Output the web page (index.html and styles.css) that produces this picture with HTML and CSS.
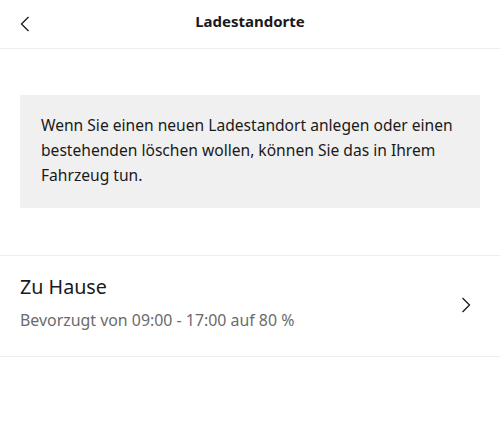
FILE: index.html
```html
<!DOCTYPE html>
<html lang="de">
<head>
<meta charset="utf-8">
<link rel="stylesheet" href="styles.css">
</head>
<body>
<header class="topbar">
  <button class="back" aria-label="Zurück">
    <svg width="10" height="16" viewBox="0 0 10 16"><path d="M8.5 1 L1.5 8 L8.5 15" fill="none" stroke="#1a1a1a" stroke-width="1.3"/></svg>
  </button>
  <h1 class="title">Ladestandorte</h1>
</header>
<main class="content">
  <div class="notice">
    <p>Wenn Sie einen neuen Ladestandort anlegen oder einen bestehenden löschen wollen, können Sie das in Ihrem Fahrzeug tun.</p>
  </div>
  <ul class="list">
    <li class="item">
      <div class="item-text">
        <div class="item-title">Zu Hause</div>
        <div class="item-sub">Bevorzugt von 09:00 - 17:00 auf 80 %</div>
      </div>
      <svg class="chev" width="10" height="16" viewBox="0 0 10 16"><path d="M1.5 1 L8.5 8 L1.5 15" fill="none" stroke="#1a1a1a" stroke-width="1.3"/></svg>
    </li>
  </ul>
</main>
</body>
</html>
```
FILE: styles.css
```css
* { box-sizing: border-box; }
html, body { margin: 0; padding: 0; background: #fff; }
body {
  font-family: "Noto Sans", "Open Sans", sans-serif;
  color: #1a1a1a;
  width: 500px;
}
.topbar {
  height: 49px;
  border-bottom: 1px solid #eeeeee;
  display: flex;
  align-items: center;
  justify-content: center;
  position: relative;
}
.back {
  position: absolute;
  left: 15px;
  top: 12px;
  width: 20px;
  height: 24px;
  padding: 0;
  border: 0;
  background: none;
  display: flex;
  align-items: center;
  justify-content: center;
}
.title {
  margin: 0;
  font-size: 15px;
  font-weight: 700;
  line-height: 20px;
  margin-top: -6px;
}
.content { padding-top: 46px; }
.notice {
  margin: 0 20px;
  background: #f0f0f0;
  padding: 18px 21px 20px;
}
.notice p {
  margin: 0;
  font-size: 15.6px;
  line-height: 25px;
}
.list {
  list-style: none;
  margin: 47px 0 0;
  padding: 0;
  border-top: 1px solid #eeeeee;
}
.item {
  display: flex;
  align-items: center;
  justify-content: space-between;
  padding: 17px 29px 24px 20px;
  border-bottom: 1px solid #eeeeee;
}
.item-title {
  font-size: 19.7px;
  line-height: 28px;
}
.item-sub {
  font-size: 15.9px;
  line-height: 24px;
  color: #6b6b6b;
  margin-top: 6.5px;
}
.chev { margin-top: 6px; }
```
